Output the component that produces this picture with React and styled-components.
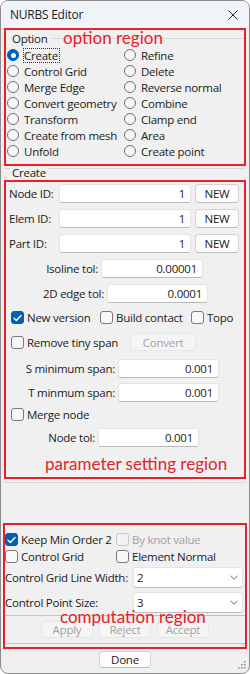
import React from 'react';
import styled, { createGlobalStyle } from 'styled-components';

const RED = '#e5222b';
const FONT = `"Open Sans", "Noto Sans", sans-serif`;

const Global = createGlobalStyle`
  html, body { margin: 0; padding: 0; background: #ffffff; }
  body { font-family: ${FONT}; font-size: 11.5px; letter-spacing: -0.25px; color: #1b1b1b; }
  * { box-sizing: border-box; }
`;

const Window = styled.div`
  position: relative;
  width: 250px;
  height: 674px;
  border: 1px solid #8c8c8c;
  border-radius: 8px;
  background: #f0f0f0;
  overflow: hidden;
  display: flex;
  flex-direction: column;
`;

const TitleBar = styled.div`
  flex: none;
  height: 27px;
  background: #f1f4f9;
  display: flex;
  align-items: center;
  justify-content: space-between;
  padding: 0 11px 0 9px;
  font-size: 12px;
`;

const Content = styled.div`
  display: flex;
  flex-direction: column;
  padding: 0 3px;
`;

const RedBox = styled.div`
  position: relative;
  border: 2px solid ${RED};
  margin: 0 ${(p) => p.$mx || 0}px;
  padding-bottom: ${(p) => p.$pb || 0}px;
  margin-top: ${(p) => p.$mt || 0}px;
`;

const Note = styled.div`
  position: absolute;
  left: ${(p) => p.$x}px;
  top: ${(p) => p.$y}px;
  font-family: Lato, "Noto Sans", sans-serif;
  font-size: 17px;
  letter-spacing: 0;
  line-height: 20px;
  color: ${RED};
  white-space: nowrap;
  pointer-events: none;
`;

const Legend = styled.div`
  height: 17px;
  display: flex;
  align-items: center;
  padding-left: 6px;
`;

const LegendLine = styled.div`
  flex: 1;
  height: 1px;
  background: #d8d8d8;
  margin-left: 4px;
`;

const RadioGrid = styled.div`
  display: grid;
  grid-template-columns: 117px 1fr;
  grid-auto-rows: 16px;
  padding: 0 0 5px 1px;
`;

const RadioItem = styled.label`
  display: flex;
  align-items: center;
  white-space: nowrap;
`;

const RadioDot = styled.span`
  flex: none;
  position: relative;
  width: 12px;
  height: 12px;
  margin-right: 5px;
  border-radius: 50%;
  border: 1px solid ${(p) => (p.$on ? '#005fb8' : '#6f6f6f')};
  background: ${(p) => (p.$on ? '#005fb8' : '#f7f7f7')};
  &::after {
    content: '';
    display: ${(p) => (p.$on ? 'block' : 'none')};
    position: absolute;
    left: 2.5px;
    top: 2.5px;
    width: 5px;
    height: 5px;
    border-radius: 50%;
    background: #ffffff;
  }
`;

const RadioText = styled.span`
  line-height: 13px;
  border: 1px dotted ${(p) => (p.$focus ? '#333' : 'transparent')};
  margin-left: -1px;
  padding: 0 1px 0 0;
`;

const GroupHeader = styled.div`
  height: 14px;
  display: flex;
  align-items: flex-start;
`;

const HeaderLine = styled.div`
  flex: ${(p) => (p.$w ? 'none' : '1')};
  width: ${(p) => (p.$w ? `${p.$w}px` : 'auto')};
  height: 1px;
  margin-top: 2px;
  background: #d8d8d8;
`;

const HeaderText = styled.span`
  line-height: 14px;
  padding: 0 2px;
`;

const Row = styled.div`
  display: flex;
  align-items: center;
  height: ${(p) => p.$h || 19}px;
  margin-top: ${(p) => p.$mt || 0}px;
  padding-left: ${(p) => p.$pl || 0}px;
  justify-content: ${(p) => (p.$center ? 'center' : 'flex-start')};
  gap: ${(p) => p.$gap || 0}px;
`;

const FieldLabel = styled.span`
  flex: none;
  width: ${(p) => p.$w}px;
  text-align: ${(p) => (p.$left ? 'left' : 'right')};
  padding-left: ${(p) => p.$pl || 0}px;
  margin-right: ${(p) => (p.$left ? 0 : 3)}px;
  white-space: nowrap;
`;

const Input = styled.div`
  flex: none;
  width: ${(p) => p.$w}px;
  height: ${(p) => p.$h || 19}px;
  background: #ffffff;
  border: 1px solid #e4e4e4;
  border-bottom-color: #b9b9b9;
  border-radius: 3px;
  display: flex;
  align-items: center;
  justify-content: flex-end;
  padding-right: 5px;
`;

const Button = styled.div`
  flex: none;
  width: ${(p) => p.$w}px;
  height: ${(p) => p.$h || 19}px;
  margin-left: ${(p) => p.$ml || 0}px;
  border-radius: 4px;
  border: 1px solid ${(p) => (p.$disabled ? '#e6e6e6' : '#d3d3d3')};
  border-bottom-color: ${(p) => (p.$disabled ? '#e6e6e6' : '#bcbcbc')};
  background: ${(p) => (p.$disabled ? '#f5f5f5' : '#fdfdfd')};
  color: ${(p) => (p.$disabled ? '#a2a2a2' : '#1b1b1b')};
  display: flex;
  align-items: center;
  justify-content: center;
`;

const CheckItem = styled.label`
  flex: none;
  width: ${(p) => (p.$w ? `${p.$w}px` : 'auto')};
  display: flex;
  align-items: center;
  white-space: nowrap;
  color: ${(p) => (p.$disabled ? '#a0a0a0' : 'inherit')};
`;

const Box = styled.span`
  flex: none;
  width: 13px;
  height: 13px;
  margin-right: 3px;
  border-radius: 3px;
  border: 1px solid ${(p) => (p.$on ? '#005fb8' : p.$disabled ? '#c9c9c9' : '#7a7a7a')};
  background: ${(p) => (p.$on ? '#005fb8' : p.$disabled ? '#f3f3f3' : '#f8f8f8')};
  display: flex;
  align-items: center;
  justify-content: center;
`;

const Separator = styled.div`
  height: 1px;
  margin-top: ${(p) => p.$mt || 0}px;
  background: ${(p) => p.$c || '#c3c3c3'};
`;

const Combo = styled.div`
  flex: none;
  width: 110px;
  height: 21px;
  background: #ffffff;
  border: 1px solid #e4e4e4;
  border-bottom-color: #bdbdbd;
  border-radius: 3px;
  display: flex;
  align-items: center;
  justify-content: space-between;
  padding: 0 4px 0 3px;
`;

const Grip = styled.svg`
  position: absolute;
  right: 2px;
  bottom: 3px;
`;

const CheckMark = () => (
  <svg width="9" height="8" viewBox="0 0 9 8">
    <path d="M1 4.2 L3.4 6.4 L8 1.5" fill="none" stroke="#ffffff" strokeWidth="1.4" strokeLinecap="round" strokeLinejoin="round" />
  </svg>
);

const Check = ({ on, disabled, w, children }) => (
  <CheckItem $w={w} $disabled={disabled}>
    <Box $on={on} $disabled={disabled}>{on && <CheckMark />}</Box>
    {children}
  </CheckItem>
);

const Chevron = () => (
  <svg width="8" height="5" viewBox="0 0 8 5">
    <path d="M0.5 0.8 L4 4.2 L7.5 0.8" fill="none" stroke="#6a6a6a" strokeWidth="1" />
  </svg>
);

const radios = [
  ['Create', 'Refine'],
  ['Control Grid', 'Delete'],
  ['Merge Edge', 'Reverse normal'],
  ['Convert geometry', 'Combine'],
  ['Transform', 'Clamp end'],
  ['Create from mesh', 'Area'],
  ['Unfold', 'Create point'],
];

export default function App() {
  return (
    <>
      <Global />
      <Window>
        <TitleBar>
          <span>NURBS Editor</span>
          <svg width="10" height="10" viewBox="0 0 10 10">
            <path d="M0.5 0.5 L9.5 9.5 M9.5 0.5 L0.5 9.5" stroke="#2b2b2b" strokeWidth="1" />
          </svg>
        </TitleBar>
        <Content>
          <RedBox>
            <Legend>
              <span>Option</span>
              <LegendLine />
            </Legend>
            <RadioGrid>
              {radios.flat().map((_, i) => {
                const row = Math.floor(i / 2);
                const col = i % 2;
                const label = radios[row][col];
                const on = label === 'Create' && col === 0;
                return (
                  <RadioItem key={i}>
                    <RadioDot $on={on} />
                    <RadioText $focus={on}>{label}</RadioText>
                  </RadioItem>
                );
              })}
            </RadioGrid>
            <Note $x={57} $y={-2}>option region</Note>
          </RedBox>

          <GroupHeader>
            <HeaderLine $w={6} />
            <HeaderText>Create</HeaderText>
            <HeaderLine />
          </GroupHeader>

          <RedBox $pb={30}>
            <Row $mt={2}>
              <FieldLabel $left $pl={3} $w={53}>Node ID:</FieldLabel>
              <Input $w={132}>1</Input>
              <Button $w={44} $ml={4}>NEW</Button>
            </Row>
            <Row $mt={6}>
              <FieldLabel $left $pl={3} $w={53}>Elem ID:</FieldLabel>
              <Input $w={132}>1</Input>
              <Button $w={44} $ml={4}>NEW</Button>
            </Row>
            <Row $mt={6}>
              <FieldLabel $left $pl={3} $w={53}>Part ID:</FieldLabel>
              <Input $w={132}>1</Input>
              <Button $w={44} $ml={4}>NEW</Button>
            </Row>
            <Row $mt={6}>
              <FieldLabel $w={92}>Isoline tol:</FieldLabel>
              <Input $w={102}>0.00001</Input>
            </Row>
            <Row $mt={6}>
              <FieldLabel $w={98}>2D edge tol:</FieldLabel>
              <Input $w={101}>0.0001</Input>
            </Row>
            <Row $mt={8} $h={13} $pl={5}>
              <Check on w={89}>New version</Check>
              <Check w={91}>Build contact</Check>
              <Check>Topo</Check>
            </Row>
            <Row $mt={9} $h={18} $pl={5}>
              <Check w={119}>Remove tiny span</Check>
              <Button $w={66} $h={18} $disabled>Convert</Button>
            </Row>
            <Row $mt={8}>
              <FieldLabel $w={109}>S minimum span:</FieldLabel>
              <Input $w={101}>0.001</Input>
            </Row>
            <Row $mt={5}>
              <FieldLabel $w={109}>T minmum span:</FieldLabel>
              <Input $w={101}>0.001</Input>
            </Row>
            <Row $mt={6} $h={13} $pl={5}>
              <Check>Merge node</Check>
            </Row>
            <Row $mt={7}>
              <FieldLabel $w={89}>Node tol:</FieldLabel>
              <Input $w={101}>0.001</Input>
            </Row>
            <Note $x={39} $y={272}>parameter setting region</Note>
          </RedBox>

          <Separator $mt={3} $c="#dadada" />

          <RedBox $mx={-1} $mt={40} $pb={3}>
            <Row $mt={8} $h={13}>
              <Check on w={111}>Keep Min Order 2</Check>
              <Check disabled>By knot value</Check>
            </Row>
            <Row $mt={4} $h={13}>
              <Check w={111}>Control Grid</Check>
              <Check>Element Normal</Check>
            </Row>
            <Row $mt={4} $h={21}>
              <FieldLabel $left $w={128}>Control Grid Line Width:</FieldLabel>
              <Combo>
                <span>2</span>
                <Chevron />
              </Combo>
            </Row>
            <Row $mt={4} $h={21}>
              <FieldLabel $left $w={128}>Control Point Size:</FieldLabel>
              <Combo>
                <span>3</span>
                <Chevron />
              </Combo>
            </Row>
            <Separator $mt={2} />
            <Row $mt={5} $h={17} $center $gap={6}>
              <Button $w={52} $h={17} $disabled>Apply</Button>
              <Button $w={52} $h={17} $disabled>Reject</Button>
              <Button $w={52} $h={17} $disabled>Accept</Button>
            </Row>
            <Separator $mt={5} />
            <Note $x={55} $y={82}>computation region</Note>
          </RedBox>

          <Row $mt={2} $h={17} $center>
            <Button $w={52} $h={17}>Done</Button>
          </Row>
        </Content>
        <Grip width="10" height="10" viewBox="0 0 10 10">
          {[[7, 1], [4, 4], [7, 4], [1, 7], [4, 7], [7, 7]].map(([x, y], i) => (
            <rect key={i} x={x} y={y} width="1.5" height="1.5" fill="#8a8a8a" />
          ))}
        </Grip>
      </Window>
    </>
  );
}
